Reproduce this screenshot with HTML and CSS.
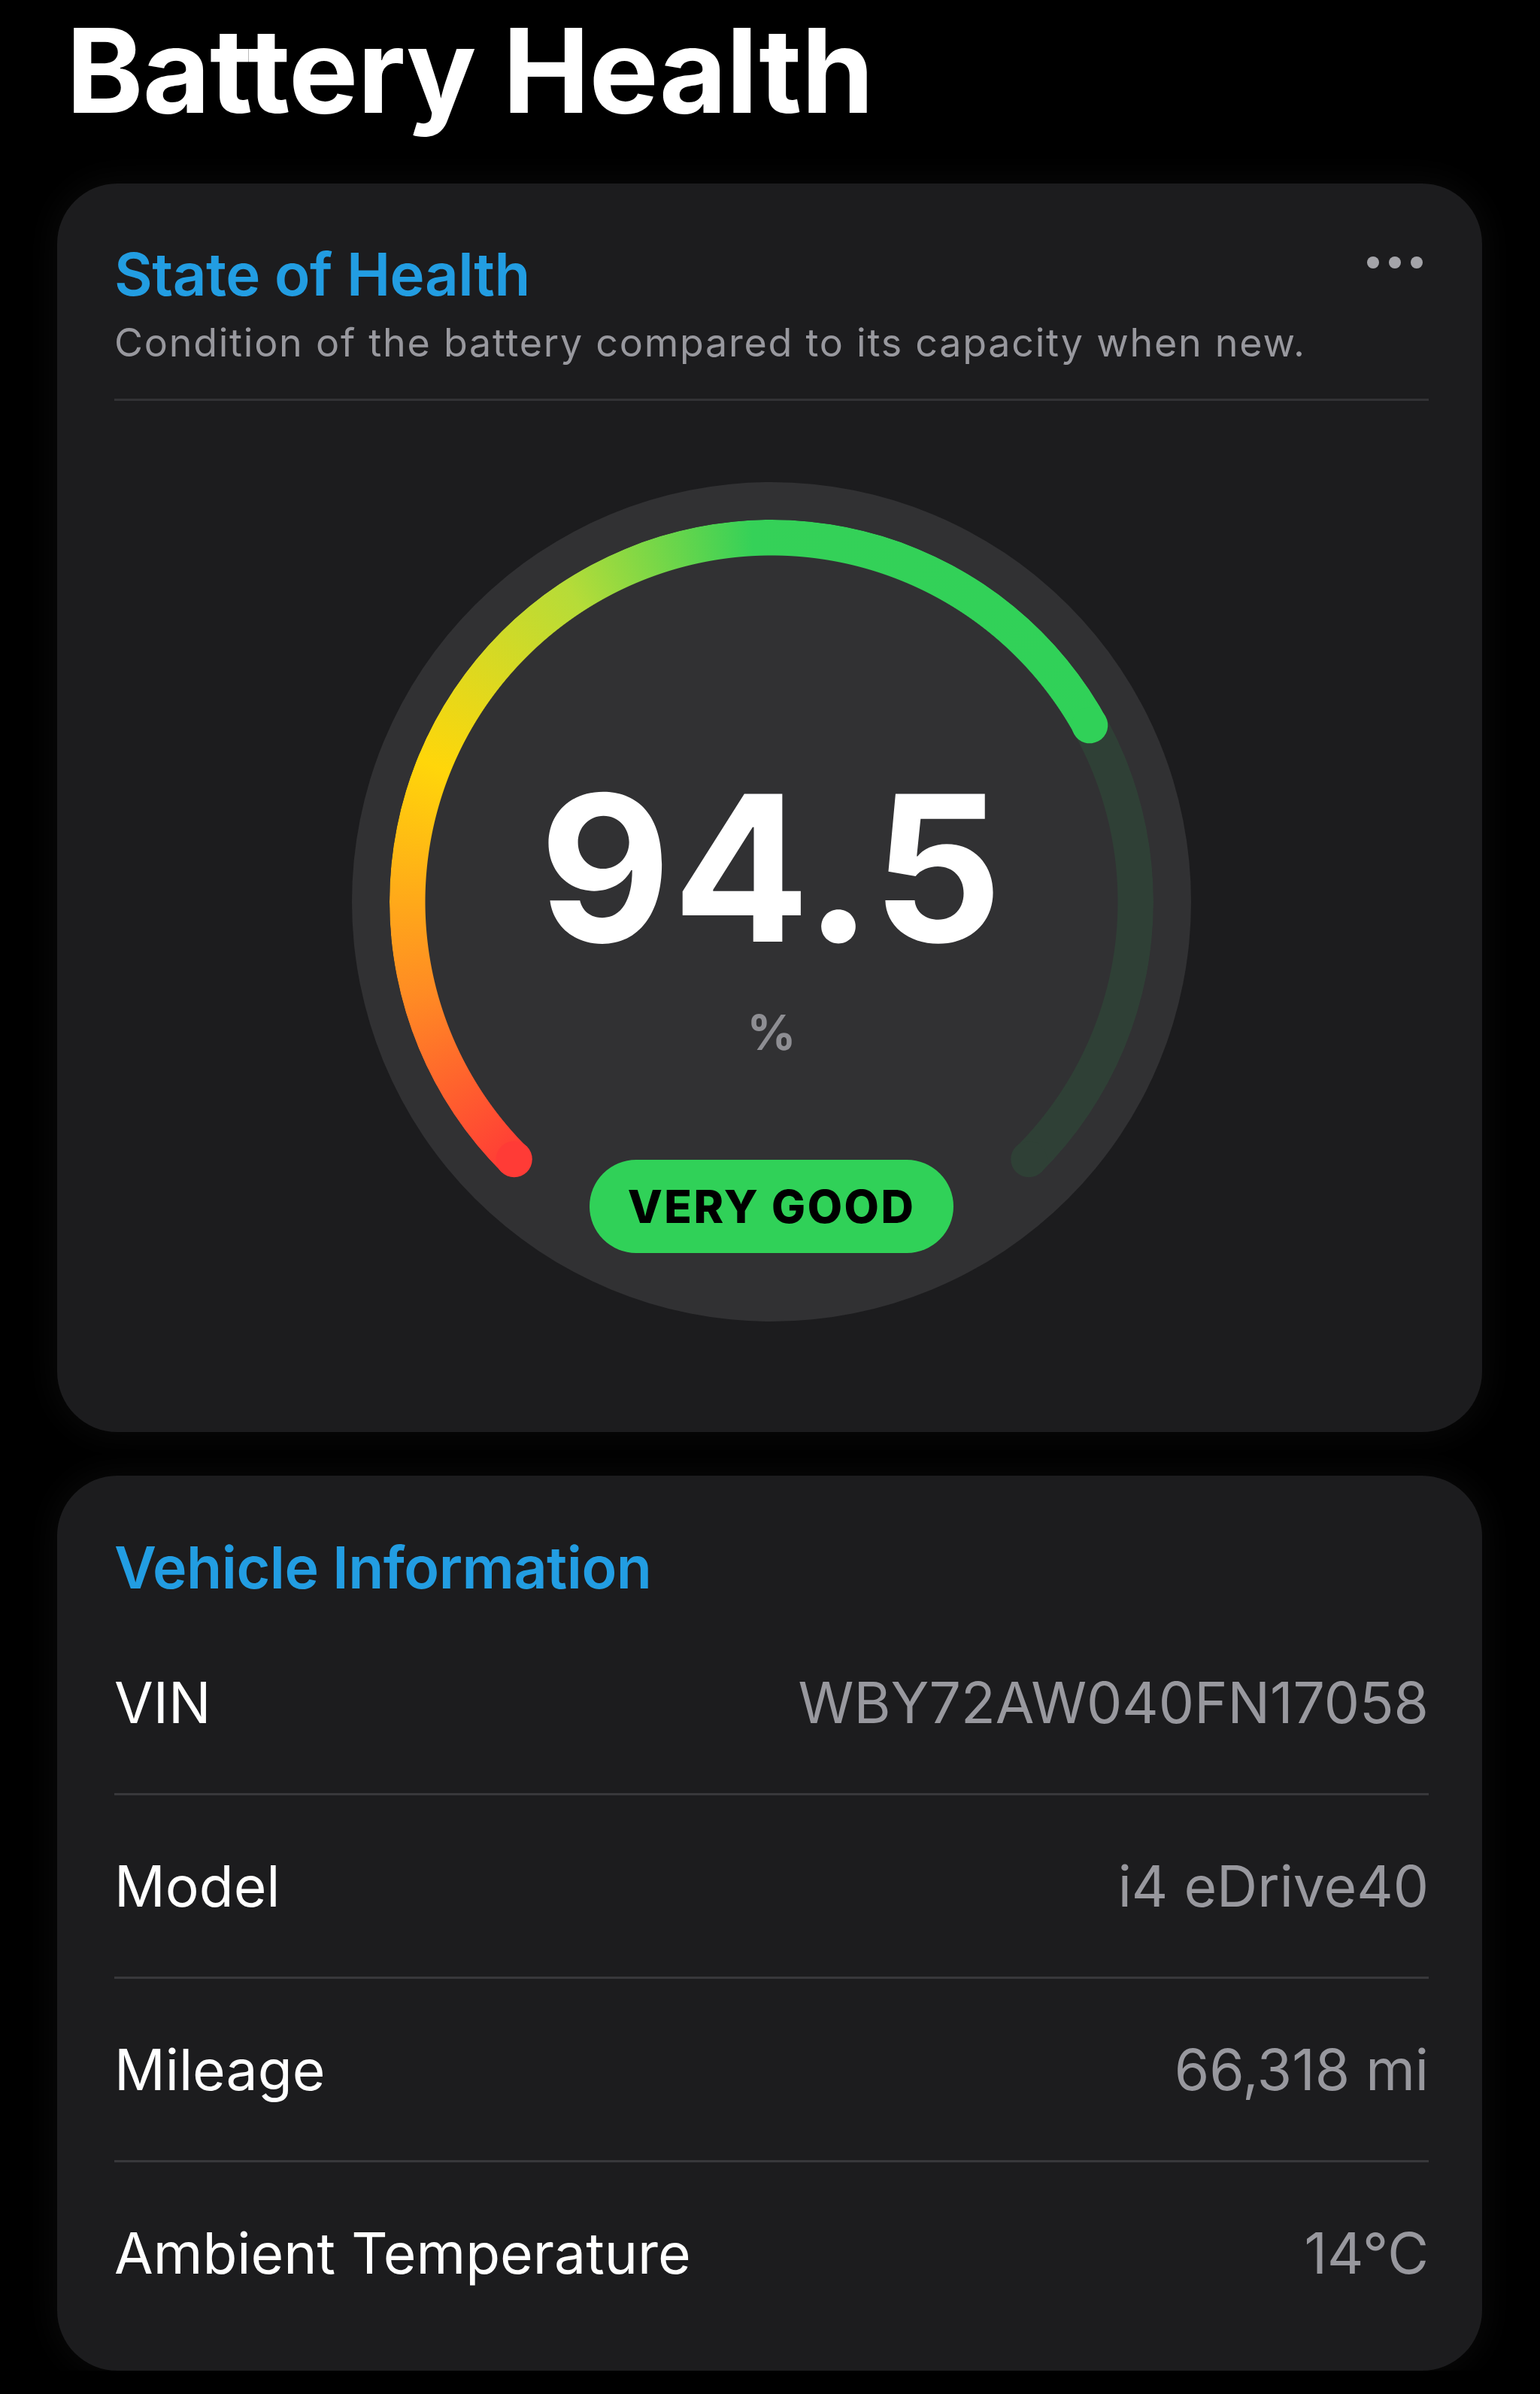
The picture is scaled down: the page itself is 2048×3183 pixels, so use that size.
FILE: index.html
```html
<!DOCTYPE html>
<html lang="en">
<head>
  <meta charset="UTF-8" />
  <meta name="viewport" content="width=device-width, initial-scale=1.0" />
  <title>Battery Health</title>
  <link rel="stylesheet" href="styles.css">
</head>
<body>
  <h1 class="page-title">Battery Health</h1>

  <section class="card health">
    <div class="card-head">
      <div>
        <h2 class="card-title">State of Health</h2>
        <p class="card-sub">Condition of the battery compared to its capacity when new.</p>
      </div>
      <div class="more"><span></span><span></span><span></span></div>
    </div>
    <hr class="rule" />

    <div class="gauge">
      <div class="ring"></div>
      <div class="cap cap-start"></div>
      <div class="cap cap-track"></div>
      <div class="cap cap-value"></div>
      <div class="value">94.5</div>
      <div class="unit">%</div>
      <div class="badge">VERY GOOD</div>
    </div>
  </section>

  <section class="card info">
    <h2 class="card-title">Vehicle Information</h2>
    <div class="rows">
      <div class="row"><span class="label">VIN</span><span class="val">WBY72AW040FN17058</span></div>
      <div class="row"><span class="label">Model</span><span class="val">i4 eDrive40</span></div>
      <div class="row"><span class="label">Mileage</span><span class="val">66,318 mi</span></div>
      <div class="row"><span class="label">Ambient Temperature</span><span class="val">14°C</span></div>
    </div>
  </section>
</body>
</html>
```

FILE: styles.css
```css
body {
  margin: 0;
  background-color: #000;
  color: #fff;
  font-family: Inter, "Noto Sans", sans-serif;
}
.page-title {
  margin: 0 0 0 88px;
  font-size: 155px;
  line-height: normal;
  font-weight: 700;
  letter-spacing: -0.8px;
}
.card {
  background-color: #1c1c1e;
  border-radius: 80px;
  margin: 0 77px 0 76px;
  padding: 0 71px 0 76px;
  box-shadow: 0 0 40px 8px rgba(255, 255, 255, 0.035);
}
.health {
  margin-top: 57px;
  padding-top: 82px;
  padding-bottom: 147px;
}
.card-head {
  display: flex;
  justify-content: space-between;
  align-items: flex-start;
}
.card-title {
  margin: 0;
  color: #229de2;
  font-size: 78px;
  line-height: 1;
  font-weight: 600;
  letter-spacing: -0.5px;
}
.card-sub {
  margin: 26px 0 0;
  color: #98989e;
  font-size: 52px;
  line-height: 1;
  letter-spacing: 1.75px;
}
.more {
  display: flex;
  gap: 13px;
  margin: 15px 8px 0 0;
}
.more span {
  width: 16px;
  height: 16px;
  border-radius: 50%;
  background-color: #a4a4a9;
}
.rule {
  margin: 48px 0 0;
  border: none;
  height: 3px;
  background-color: #323235;
}

/* gauge */
.gauge {
  position: relative;
  width: 1116px;
  height: 1116px;
  margin: 108px auto 0;
  border-radius: 50%;
  background-color: #313133;
  display: flex;
  flex-direction: column;
  align-items: center;
  padding-top: 378px;
  box-sizing: border-box;
}
.ring {
  position: absolute;
  inset: 50px;
  border-radius: 50%;
  background: conic-gradient(from 225deg,
    #ff3b36 0deg, #ff8a24 30deg, #ffd60a 67deg, #b6dc38 102deg,
    #35d158 132deg, #30d158 196deg, #2f4036 196deg, #2f4036 270deg,
    transparent 270deg);
  -webkit-mask: radial-gradient(closest-side, transparent calc(100% - 48px), #000 calc(100% - 47px));
  mask: radial-gradient(closest-side, transparent calc(100% - 48px), #000 calc(100% - 47px));
}
.cap {
  position: absolute;
  inset: 50px;
}
.cap::before {
  content: '';
  position: absolute;
  top: 0;
  left: calc(50% - 24px);
  width: 48px;
  height: 48px;
  border-radius: 50%;
}
.cap-start { transform: rotate(-135deg); }
.cap-start::before { background-color: #ff3b36; }
.cap-track { transform: rotate(135deg); }
.cap-track::before { background-color: #2f4036; }
.cap-value { transform: rotate(61deg); }
.cap-value::before { background-color: #30d158; }

.value {
  position: relative;
  font-size: 270px;
  line-height: 1;
  font-weight: 700;
  letter-spacing: 2px;
}
.unit {
  position: relative;
  margin-top: 52px;
  color: #8e8e93;
  font-size: 64px;
  line-height: 1;
  font-weight: 700;
}
.badge {
  position: relative;
  margin-top: 137px;
  width: 484px;
  height: 124px;
  border-radius: 62px;
  background-color: #30d158;
  color: #000;
  font-size: 60px;
  font-weight: 800;
  letter-spacing: 2.5px;
  display: flex;
  align-items: center;
  justify-content: center;
}

/* vehicle info */
.info {
  margin-top: 58px;
  padding-top: 84px;
  padding-bottom: 36px;
}
.info .card-title {
  font-size: 77px;
}
.rows {
  margin-top: 20px;
}
.row {
  display: flex;
  justify-content: space-between;
  align-items: center;
  height: 241px;
  font-size: 75px;
  line-height: 1;
}
.row + .row {
  border-top: 3px solid #38383b;
}
.label {
  color: #fff;
}
.val {
  color: #98989e;
}
```
